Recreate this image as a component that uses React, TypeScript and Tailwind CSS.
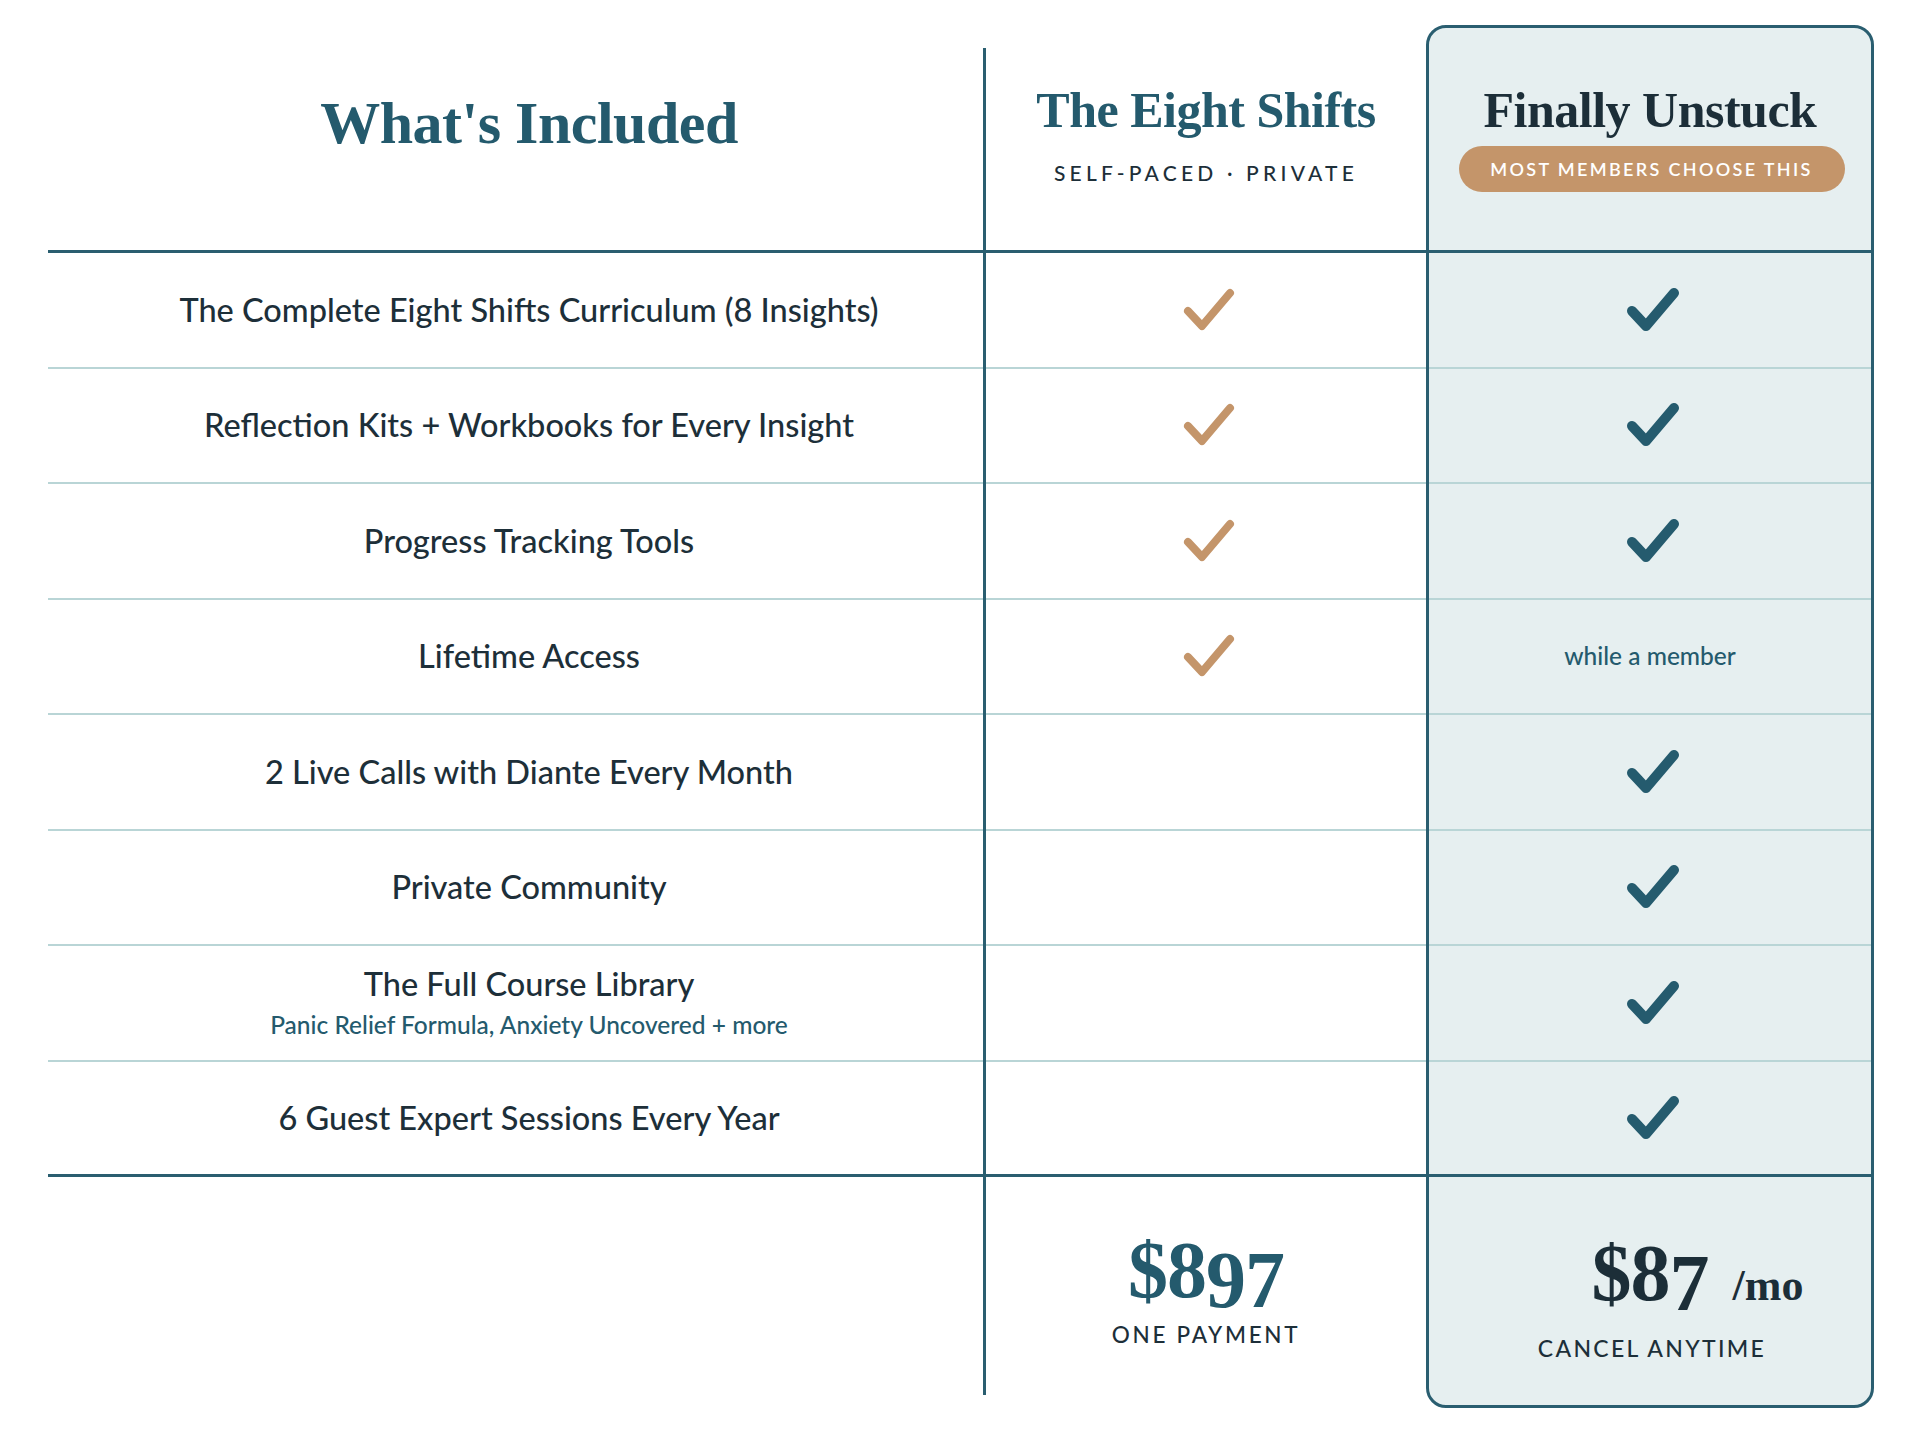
import React from "react";

const TEAL = "#255b6e";

function Check({ color, stroke }: { color: string; stroke: number }) {
  return (
    <svg width="52" height="44" viewBox="0 0 52 44" fill="none" className="ml-[5px]">
      <path
        d="M5 23 L19 38 L47 5"
        stroke={color}
        strokeWidth={stroke}
        strokeLinecap="round"
        strokeLinejoin="round"
      />
    </svg>
  );
}

type Row = {
  title: string;
  sub?: string;
  a: boolean;
  b: "check" | "member";
};

const rows: Row[] = [
  { title: "The Complete Eight Shifts Curriculum (8 Insights)", a: true, b: "check" },
  { title: "Reflection Kits + Workbooks for Every Insight", a: true, b: "check" },
  { title: "Progress Tracking Tools", a: true, b: "check" },
  { title: "Lifetime Access", a: true, b: "member" },
  { title: "2 Live Calls with Diante Every Month", a: false, b: "check" },
  { title: "Private Community", a: false, b: "check" },
  {
    title: "The Full Course Library",
    sub: "Panic Relief Formula, Anxiety Uncovered + more",
    a: false,
    b: "check",
  },
  { title: "6 Guest Expert Sessions Every Year", a: false, b: "check" },
];

function rowBorder(i: number) {
  return i === rows.length - 1
    ? "border-b-[3px] border-[#2a5e70]"
    : "border-b-2 border-[#b9d5d6]";
}

export default function App() {
  return (
    <div className="min-h-[1440px] w-[1920px] bg-white font-['Lato',sans-serif] text-[#1d2f39]">
      <div className="flex items-start pt-[25px] pl-[48px]">
        {/* Column A: features */}
        <div className="flex w-[935px] flex-col">
          <div className="flex h-[228px] justify-center border-b-[3px] border-[#2a5e70] pl-[27px] pt-[68px]">
            <h1 className="font-['Liberation_Serif',serif] text-[60px] font-bold leading-none tracking-[-0.5px] text-[#245a6d]">
              What's Included
            </h1>
          </div>
          {rows.map((r, i) => (
            <div
              key={r.title}
              className={`flex h-[115.5px] flex-col items-center justify-center pl-[27px] text-center ${rowBorder(i)}`}
            >
              <div className="text-[32.5px] font-medium leading-none">{r.title}</div>
              {r.sub && (
                <div className="mt-[13px] text-[24.5px] font-medium leading-none text-[#245a6d]">
                  {r.sub}
                </div>
              )}
            </div>
          ))}
        </div>

        {/* Column B: The Eight Shifts */}
        <div className="mt-[23px] flex w-[443px] flex-col border-l-[3px] border-[#2a5e70]">
          <div className="flex h-[205px] flex-col items-center border-b-[3px] border-[#2a5e70] pt-[37px]">
            <h2 className="font-['Liberation_Serif',serif] text-[50px] font-bold leading-none tracking-[-0.5px] text-[#245a6d]">
              The Eight Shifts
            </h2>
            <div className="mt-[27px] text-[21px] font-medium leading-none tracking-[0.2em] text-[#1d2f39]">
              SELF-PACED · PRIVATE
            </div>
          </div>
          {rows.map((r, i) => (
            <div
              key={r.title}
              className={`flex h-[115.5px] items-center justify-center ${rowBorder(i)}`}
            >
              {r.a && <Check color="#c4956a" stroke={8} />}
            </div>
          ))}
          <div className="flex h-[218px] flex-col items-center pt-[53px]">
            <div className="font-['Liberation_Serif',serif] text-[80px] font-bold leading-none tracking-[-1px] text-[#245a6d]">
              $8<span className="align-[-10px]">97</span>
            </div>
            <div className="mt-[4px] text-[22.5px] font-medium leading-none tracking-[0.12em]">
              ONE PAYMENT
            </div>
          </div>
        </div>

        {/* Column C: Finally Unstuck card */}
        <div className="flex w-[448px] flex-col overflow-hidden rounded-[20px] border-[3px] border-[#2a5e70] bg-[#e6eff0]">
          <div className="flex h-[225px] flex-col items-center border-b-[3px] border-[#2a5e70] pt-[57px]">
            <h2 className="font-['Liberation_Serif',serif] text-[50px] font-bold leading-none tracking-[-0.5px] text-[#1c2e38]">
              Finally Unstuck
            </h2>
            <div className="mt-[11px] ml-[3px] flex h-[46px] w-[386px] items-center justify-center rounded-full bg-[#c4956a] text-[18px] font-semibold leading-none tracking-[0.13em] text-white">
              MOST MEMBERS CHOOSE THIS
            </div>
          </div>
          {rows.map((r, i) => (
            <div
              key={r.title}
              className={`flex h-[115.5px] items-center justify-center ${rowBorder(i)}`}
            >
              {r.b === "check" ? (
                <Check color={TEAL} stroke={10} />
              ) : (
                <span className="text-[24.5px] font-medium leading-none text-[#245a6d]">
                  while a member
                </span>
              )}
            </div>
          ))}
          <div className="flex h-[228px] flex-col items-center pt-[56px]">
            <div className="grid w-full grid-cols-[1fr_auto_1fr] items-baseline">
              <div />
              <div className="font-['Liberation_Serif',serif] text-[80px] font-bold leading-none tracking-[-1px] text-[#1c2e38]">
                $8<span className="align-[-10px]">7</span>
              </div>
              <div className="pl-[24px] font-['Liberation_Serif',serif] text-[44px] font-bold leading-none text-[#1c2e38]">
                /mo
              </div>
            </div>
            <div className="mt-[14px] ml-[4px] text-[23px] font-medium leading-none tracking-[0.1em]">
              CANCEL ANYTIME
            </div>
          </div>
        </div>
      </div>
    </div>
  );
}
